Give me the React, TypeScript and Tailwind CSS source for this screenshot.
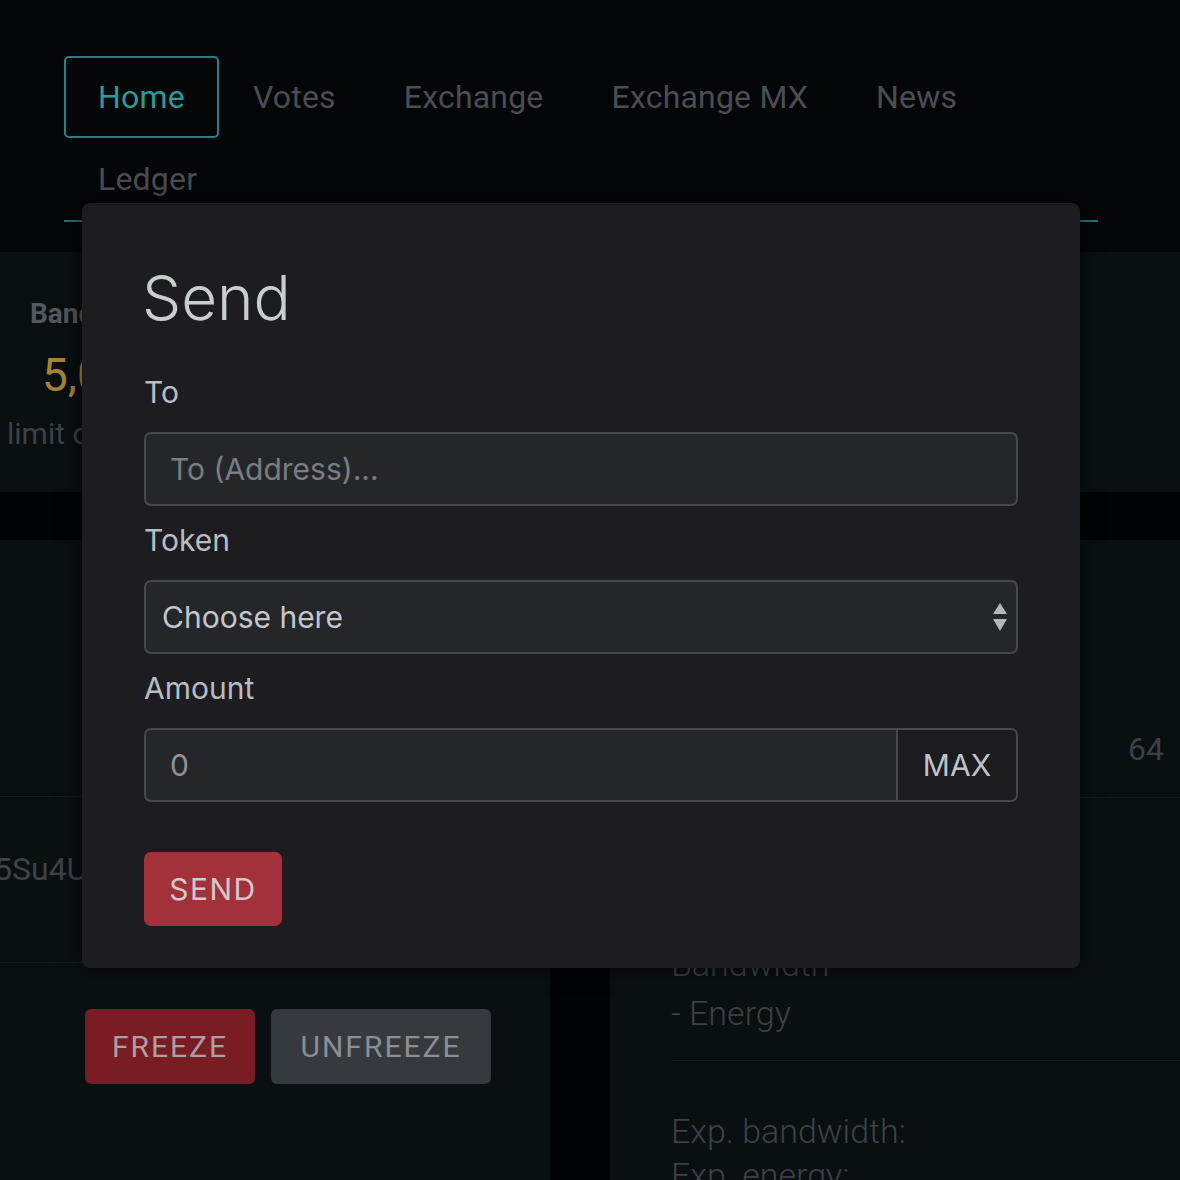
import React from 'react';

const navItems = ['Home', 'Votes', 'Exchange', 'Exchange MX', 'News', 'Ledger'];

function SelectArrows() {
  return (
    <svg width="16" height="30" viewBox="0 0 16 30" className="shrink-0">
      <path d="M8 1 L15 12 L1 12 Z" fill="#b4b7ba" />
      <path d="M1 17 L15 17 L8 29 Z" fill="#b4b7ba" />
    </svg>
  );
}

function SendModal() {
  return (
    <div className="absolute left-[82px] top-[203px] w-[998px] h-[765px] rounded-[8px] bg-[#1d1d21] shadow-[0_0_24px_rgba(0,0,0,0.6)] px-[62px] pt-[57px] pb-[42px] font-['Inter',sans-serif]">
      <h2 className="-ml-[2px] text-[62px] leading-[76px] font-light text-[#c9cdd1]">Send</h2>

      <label className="block mt-[38px] text-[30px] leading-[36px] text-[#b9bdc1]">To</label>
      <input
        placeholder="To (Address)..."
        className="mt-[22px] w-full h-[74px] rounded-[7px] border-2 border-[#46484c] bg-[#25262a] px-[24px] text-[30px] text-[#c4c7ca] placeholder:text-[#7a7d82] outline-none"
      />

      <label className="block mt-[16px] text-[30px] leading-[36px] text-[#b9bdc1]">Token</label>
      <div className="mt-[22px] w-full h-[74px] rounded-[7px] border-2 border-[#46484c] bg-[#25262a] pl-[16px] pr-[8px] flex items-center justify-between">
        <span className="text-[30px] text-[#c4c7ca]">Choose here</span>
        <SelectArrows />
      </div>

      <label className="block mt-[16px] text-[30px] leading-[36px] text-[#b9bdc1]">Amount</label>
      <div className="mt-[22px] w-full h-[74px] rounded-[7px] border-2 border-[#46484c] bg-[#25262a] flex overflow-hidden">
        <input
          defaultValue="0"
          className="flex-1 min-w-0 bg-transparent px-[24px] text-[30px] text-[#8f9297] outline-none"
        />
        <div className="w-[120px] border-l-2 border-[#46484c] bg-[#1c1c20] flex items-center justify-center text-[30px] text-[#c0c3c6]">
          MAX
        </div>
      </div>

      <button className="mt-[50px] w-[138px] h-[74px] rounded-[7px] bg-[#a3313c] text-[30px] tracking-[1.5px] text-[#d2c9ca]">
        SEND
      </button>
    </div>
  );
}

export default function App() {
  return (
    <div className="relative w-full h-[1180px] overflow-hidden bg-[#020304] font-['Roboto',sans-serif]">
      {/* Nav */}
      <div className="bg-[#050608] pt-[56px] pb-[30px] pl-[64px] pr-[82px]">
        <ul className="flex flex-wrap border-b-2 border-[#1d7472]">
          {navItems.map((item) => (
            <li
              key={item}
              className={`h-[82px] px-[32px] flex items-center text-[32px] tracking-[0.2px] border-2 rounded-[5px] ${
                item === 'Home' ? 'border-[#1f8583] text-[#2a9c99]' : 'border-transparent text-[#4a4d52]'
              }`}
            >
              {item}
            </li>
          ))}
        </ul>
      </div>

      {/* Top stats card */}
      <div className="h-[240px] bg-[#0a0f12] flex flex-col pt-[45px]">
        <div className="ml-[30px] text-[28px] leading-[34px] font-bold text-[#55585c]">Bandwidth</div>
        <div className="ml-[42px] mt-[17px] text-[46px] leading-[54px] text-[#a8843a]">5,000</div>
        <div className="ml-[7px] mt-[14px] text-[30px] leading-[36px] text-[#3d4145]">limit of bandwidth</div>
      </div>

      {/* Lower cards */}
      <div className="mt-[48px] grid grid-cols-[550px_1fr] gap-[60px]">
        <div className="bg-[#0a0f12] h-[640px] flex flex-col">
          <div className="h-[257px] shrink-0 border-b border-[#151b1f]" />
          <div className="h-[166px] shrink-0 border-b border-[#151b1f] pt-[53px]">
            <div className="-ml-[6px] text-[32px] leading-[38px] text-[#3f4347] whitespace-nowrap">5Su4UqzVdXnbGkRhs</div>
          </div>
          <div className="flex gap-[16px] pl-[85px] pt-[46px]">
            <button className="h-[75px] w-[170px] rounded-[6px] bg-[#7a1c23] text-[30px] tracking-[2px] text-[#a9a1a1]">
              FREEZE
            </button>
            <button className="h-[75px] w-[220px] rounded-[6px] bg-[#363a3e] text-[30px] tracking-[2px] text-[#8b8e92]">
              UNFREEZE
            </button>
          </div>
        </div>

        <div className="bg-[#0a0f12] h-[640px] pl-[61px] flex flex-col font-light text-[#3c4146]">
          <div className="h-[258px] shrink-0 border-b border-[#151b1f] flex items-end justify-end pr-[16px] pb-[28px]">
            <span className="text-[32px] leading-[40px] font-normal">64</span>
          </div>
          <div className="h-[263px] shrink-0 border-b border-[#151b1f] flex flex-col justify-end pb-[22px]">
            <div className="text-[34px] leading-[49px]">Bandwidth</div>
            <div className="text-[34px] leading-[49px]">- Energy</div>
          </div>
          <div className="shrink-0 pt-[48px]">
            <div className="text-[34px] leading-[44px]">Exp. bandwidth:</div>
            <div className="text-[34px] leading-[44px]">Exp. energy:</div>
          </div>
        </div>
      </div>

      <SendModal />
    </div>
  );
}
